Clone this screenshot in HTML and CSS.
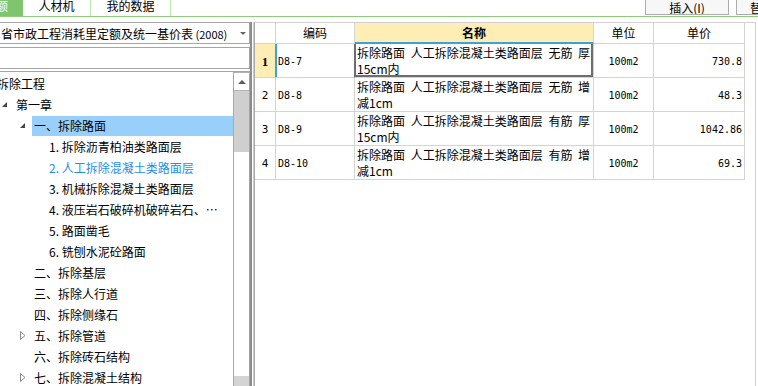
FILE: index.html
```html
<!DOCTYPE html>
<html lang="zh-CN">
<head>
    <meta charset="UTF-8">
    <title>定额库</title>
    <link rel="stylesheet" href="styles.css">
</head>
<body>

    <!-- top tabs + toolbar -->
    <div class="topbar">
        <div class="tabs">
            <div class="tab tab-active"><span>定额</span></div>
            <div class="tab tab-rcj">人材机</div>
            <div class="tab tab-mine">我的数据</div>
        </div>
        <div class="tools">
            <button class="tool-btn">插入(I)</button>
            <button class="tool-btn tool-btn-more">替换(R)</button>
        </div>
    </div>

    <div class="main">
        <!-- left: library + chapter tree -->
        <div class="side">
            <div class="combo">
                <span class="combo-text">省市政工程消耗里定额及统一基价表<span class="combo-year"> (2008)</span></span>
                <span class="combo-arrow"></span>
            </div>
            <div class="search"></div>
            <div class="tree">
                <ul class="tree-list">
                    <li class="node lv0"><span class="label">拆除工程</span></li>
                    <li class="node lv1"><span class="twisty open"></span><span class="label">第一章</span></li>
                    <li class="node lv2 sel"><span class="twisty open"></span><span class="label">一、拆除路面</span></li>
                    <li class="node lv3"><span class="twisty"></span><span class="label">1. 拆除沥青柏油类路面层</span></li>
                    <li class="node lv3 link"><span class="twisty"></span><span class="label">2. 人工拆除混凝土类路面层</span></li>
                    <li class="node lv3"><span class="twisty"></span><span class="label">3. 机械拆除混凝土类路面层</span></li>
                    <li class="node lv3"><span class="twisty"></span><span class="label">4. 液压岩石破碎机破碎岩石、…</span></li>
                    <li class="node lv3"><span class="twisty"></span><span class="label">5. 路面凿毛</span></li>
                    <li class="node lv3"><span class="twisty"></span><span class="label">6. 铣刨水泥砼路面</span></li>
                    <li class="node lv2"><span class="twisty"></span><span class="label">二、拆除基层</span></li>
                    <li class="node lv2"><span class="twisty"></span><span class="label">三、拆除人行道</span></li>
                    <li class="node lv2"><span class="twisty"></span><span class="label">四、拆除侧缘石</span></li>
                    <li class="node lv2"><span class="twisty"><svg class="tw-closed" width="6" height="9" viewBox="0 0 6 9"><polygon points="0.5,0.5 5,4.5 0.5,8.5" /></svg></span><span class="label">五、拆除管道</span></li>
                    <li class="node lv2"><span class="twisty"></span><span class="label">六、拆除砖石结构</span></li>
                    <li class="node lv2"><span class="twisty"><svg class="tw-closed" width="6" height="9" viewBox="0 0 6 9"><polygon points="0.5,0.5 5,4.5 0.5,8.5" /></svg></span><span class="label">七、拆除混凝土结构</span></li>
                </ul>
                <div class="vscroll">
                    <div class="vs-up"><span class="vs-arrow"></span></div>
                    <div class="vs-thumb"></div>
                    <div class="vs-track"></div>
                    <div class="vs-down"></div>
                </div>
            </div>
        </div>

        <div class="splitter"></div>

        <!-- right: norm items -->
        <div class="grid">
            <table class="items">
                <thead>
                    <tr>
                        <th class="c-no"></th>
                        <th class="c-code">编码</th>
                        <th class="c-name active-col">名称</th>
                        <th class="c-unit">单位</th>
                        <th class="c-price">单价</th>
                    </tr>
                </thead>
                <tbody>
                    <tr class="cur">
                        <td class="c-no">1</td>
                        <td class="c-code mono">D8-7</td>
                        <td class="c-name">拆除路面 人工拆除混凝土类路面层 无筋 厚<br>15cm内</td>
                        <td class="c-unit mono">100m2</td>
                        <td class="c-price mono">730.8</td>
                    </tr>
                    <tr>
                        <td class="c-no">2</td>
                        <td class="c-code mono">D8-8</td>
                        <td class="c-name">拆除路面 人工拆除混凝土类路面层 无筋 增<br>减1cm</td>
                        <td class="c-unit mono">100m2</td>
                        <td class="c-price mono">48.3</td>
                    </tr>
                    <tr>
                        <td class="c-no">3</td>
                        <td class="c-code mono">D8-9</td>
                        <td class="c-name">拆除路面 人工拆除混凝土类路面层 有筋 厚<br>15cm内</td>
                        <td class="c-unit mono">100m2</td>
                        <td class="c-price mono">1042.86</td>
                    </tr>
                    <tr>
                        <td class="c-no">4</td>
                        <td class="c-code mono">D8-10</td>
                        <td class="c-name">拆除路面 人工拆除混凝土类路面层 有筋 增<br>减1cm</td>
                        <td class="c-unit mono">100m2</td>
                        <td class="c-price mono">69.3</td>
                    </tr>
                </tbody>
            </table>
        </div>
    </div>

</body>
</html>
```

FILE: styles.css
```css
* {
    box-sizing: border-box;
}

body {
    margin: 0;
    width: 758px;
    height: 386px;
    overflow: hidden;
    background-color: #fff;
    color: #000;
    font-family: "Noto Sans CJK SC", "Liberation Sans", sans-serif;
    font-size: 12px;
}

/* ---------- top bar ---------- */
.topbar {
    display: flex;
    height: 17px;
    border-bottom: 1px solid #8ecb7b;
}

.tabs {
    display: flex;
}

.tab {
    height: 16px;
    line-height: 11px;
    text-align: center;
    white-space: nowrap;
    overflow: hidden;
    border-right: 1px solid #bfe2b1;
}

.tab-active {
    width: 23px;
    display: flex;
    justify-content: flex-end;
    padding-right: 15px;
    background-color: #7ec56d;
    color: #fff;
    border-right: none;
}

.tab-rcj {
    width: 68px;
}

.tab-mine {
    width: 80px;
}

.tools {
    display: flex;
    gap: 7px;
    margin-left: auto;
}

.tool-btn {
    width: 84px;
    height: 15px;
    padding: 0;
    border: 1px solid #acacac;
    border-top: none;
    background-color: #f7f7f7;
    font-family: inherit;
    font-size: 12px;
    line-height: 11px;
    color: #000;
    overflow: hidden;
    white-space: nowrap;
    vertical-align: top;
}

.tool-btn-more {
    width: 22px;
    text-align: left;
    padding-left: 13px;
    border-right: none;
}

/* ---------- main area ---------- */
.main {
    display: flex;
    height: 369px;
    padding-top: 5px;
}

.side {
    flex: none;
    width: 256px;
    margin-left: -6px;
    display: flex;
    flex-direction: column;
}

.combo {
    height: 22px;
    display: flex;
    align-items: center;
    padding-left: 6px;
    border: 1px solid #a5a5a5;
    white-space: nowrap;
}

.combo-year {
    font-size: 11px;
}

.combo-arrow {
    margin-left: auto;
    margin-right: 3px;
    border-left: 3px solid transparent;
    border-right: 3px solid transparent;
    border-top: 3px solid #666;
}

.search {
    height: 22px;
    margin-top: 3px;
    border: 1px solid #a5a5a5;
}

.tree {
    flex: 1;
    min-height: 0;
    margin-top: 2px;
    display: flex;
    border: 1px solid #a5a5a5;
    border-bottom: none;
    overflow: hidden;
}

.tree-list {
    flex: 1;
    min-width: 0;
    margin: 0;
    padding: 1px 0 0;
    list-style: none;
    overflow: hidden;
}

.node {
    height: 21px;
    display: flex;
    align-items: center;
    white-space: nowrap;
}

.lv0 { padding-left: 0; }
.lv1 { padding-left: 7px; }
.lv2 { padding-left: 25px; }
.lv3 { padding-left: 40px; }

.twisty {
    flex: none;
    width: 12px;
    height: 21px;
    display: flex;
    align-items: center;
}

.twisty.open::before {
    content: "";
    border-left: 5px solid transparent;
    border-bottom: 5px solid #444;
}

.tw-closed polygon {
    fill: #fff;
    stroke: #8c8c8c;
    stroke-width: 1;
}

.label {
    flex: 1;
    min-width: 0;
    padding-left: 2px;
    line-height: 20px;
    overflow: hidden;
}

.sel .label {
    background-color: #99d0fb;
}

.link .label {
    color: #1f8fe8;
}

/* tree scrollbar */
.vscroll {
    flex: none;
    width: 16px;
    display: flex;
    flex-direction: column;
    border-left: 1px solid #a9a9a9;
}

.vs-up {
    height: 19px;
    display: flex;
    align-items: center;
    justify-content: center;
    border-top: 1px solid #b4b4b4;
    border-bottom: 1px solid #b4b4b4;
    background-color: #fff;
}

.vs-arrow {
    border-left: 4px solid transparent;
    border-right: 4px solid transparent;
    border-bottom: 4px solid #5c5c5c;
}

.vs-thumb {
    height: 61px;
    background-color: #cfcfcf;
}

.vs-track {
    flex: 1;
    background-color: #fff;
}

.vs-down {
    height: 10px;
    background-color: #d4d4d4;
}

.splitter {
    flex: none;
    width: 4px;
    border-left: 2px solid #8c8c8c;
    border-right: 1px solid #c6ccd4;
}

/* ---------- grid ---------- */
.grid {
    flex: none;
    width: 502px;
    border-left: 1px solid #a9a9a9;
    border-top: 1px solid #d2d2d2;
    border-right: 1px solid #cfcfcf;
}

.items {
    border-collapse: separate;
    border-spacing: 0;
    table-layout: fixed;
    width: 490px;
}

.items th,
.items td {
    padding: 0;
    border-right: 1px solid #d4d4d4;
    border-bottom: 1px solid #d4d4d4;
    white-space: nowrap;
    overflow: hidden;
}

.items th {
    height: 21px;
    font-weight: normal;
    text-align: center;
    vertical-align: middle;
    line-height: 16px;
}

.items td {
    height: 33px;
    vertical-align: middle;
    padding-top: 2px;
}

.items th.c-no { width: 21px; }
.items th.c-code { width: 79px; }
.items th.c-name { width: 239px; }
.items th.c-unit { width: 60px; }
.items th.c-price { width: 91px; }

.items th.active-col {
    background-color: #feedb4;
    font-weight: bold;
    border-bottom: 2px solid #3ba2d9;
}

.items td.c-no {
    text-align: center;
    font-family: "DejaVu Sans Mono", monospace;
    font-size: 11px;
}

.mono {
    font-family: "DejaVu Sans Mono", monospace;
    font-size: 10px;
}

.items td.c-code {
    padding-left: 2px;
}

.items td.c-name {
    vertical-align: top;
    padding: 1px 2px 0;
    line-height: 16px;
    word-spacing: 3px;
}

.items td.c-unit {
    text-align: center;
}

.items td.c-price {
    text-align: right;
    padding-right: 2px;
}

/* current row */
.cur td.c-no {
    background-color: #feedb4;
    font-weight: bold;
    font-family: "Liberation Serif", serif;
    font-size: 13px;
    border-right-color: #3ba2d9;
}

.cur td.c-code {
    box-shadow: inset 1px 0 #3ba2d9;
    border-right-color: #6d6d6d;
}

.cur td.c-name {
    box-shadow: inset 1px 0 #6d6d6d, inset -2px 0 #6d6d6d, inset 0 -2px #6d6d6d;
}
```
